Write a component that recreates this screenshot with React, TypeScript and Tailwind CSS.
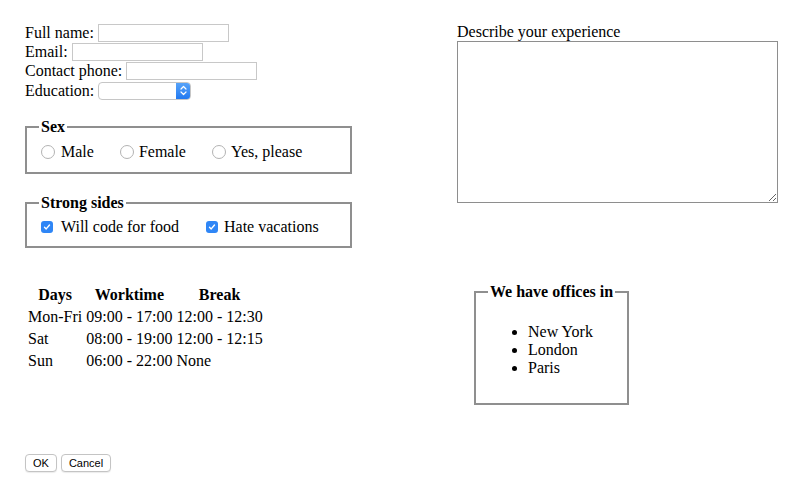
import React from 'react';

const Radio = () => (
    <span className="inline-block w-[14px] h-[14px] rounded-full border border-[#b3b3b3] bg-white shrink-0" />
);

const Check = () => (
    <span className="inline-flex w-[12px] h-[12px] rounded-[3px] bg-[#2f86f6] items-center justify-center shrink-0">
        <svg width="8" height="8" viewBox="0 0 8 8">
            <path d="M1.5 4.2 L3.2 5.9 L6.5 2" stroke="white" strokeWidth="1.4" fill="none" strokeLinecap="round" strokeLinejoin="round" />
        </svg>
    </span>
);

const Select = () => (
    <div className="flex w-[93px] h-[18px] rounded-[4px] border border-[#c6c6c6] bg-white overflow-hidden">
        <div className="flex-1" />
        <div className="w-[15px] -my-px -mr-px rounded-r-[4px] bg-gradient-to-b from-[#5aa6fa] to-[#1c76f0] flex items-center justify-center">
            <svg width="7" height="11" viewBox="0 0 7 11">
                <path d="M1 4 L3.5 1.5 L6 4 M1 7 L3.5 9.5 L6 7" stroke="white" strokeWidth="1.2" fill="none" strokeLinecap="round" strokeLinejoin="round" />
            </svg>
        </div>
    </div>
);

const TextInput = ({ ml }: { ml: string }) => (
    <input type="text" className={`${ml} w-[131px] h-[18px] border border-[#c8c8c8] bg-white outline-none`} />
);

export default function App() {
    return (
        <div className="min-h-[490px] bg-white text-black font-['Liberation_Serif',serif] text-[16px] leading-[18px] pl-[25px] pt-[23px]">
            {/* top row: personal info + description */}
            <div className="flex">
                <div className="w-[432px]">
                    <div className="flex items-center h-[19px]">
                        <span>Full name:</span>
                        <TextInput ml="ml-[4px]" />
                    </div>
                    <div className="flex items-center h-[19px]">
                        <span>Email:</span>
                        <TextInput ml="ml-[4px]" />
                    </div>
                    <div className="flex items-center h-[19px]">
                        <span>Contact phone:</span>
                        <TextInput ml="ml-[4px]" />
                    </div>
                    <div className="flex items-center h-[19px] mt-[1px]">
                        <span>Education:</span>
                        <div className="ml-[4px]"><Select /></div>
                    </div>

                    <fieldset className="mt-[18px] w-[327px] border-2 border-[#8f8f8f] px-[12px] pt-[7px] pb-[11px]">
                        <legend className="px-[2px] font-bold leading-[18px]">Sex</legend>
                        <div className="flex items-center h-[18px]">
                            <label className="flex items-center ml-[2px]"><Radio /><span className="ml-[6px]">Male</span></label>
                            <label className="flex items-center ml-[26px]"><Radio /><span className="ml-[5px]">Female</span></label>
                            <label className="flex items-center ml-[26px]"><Radio /><span className="ml-[5px]">Yes, please</span></label>
                        </div>
                    </fieldset>

                    <fieldset className="mt-[20px] w-[327px] border-2 border-[#8f8f8f] px-[12px] pt-[6px] pb-[10px]">
                        <legend className="px-[2px] font-bold leading-[18px]">Strong sides</legend>
                        <div className="flex items-center h-[18px]">
                            <label className="flex items-center ml-[2px]"><Check /><span className="ml-[8px]">Will code for food</span></label>
                            <label className="flex items-center ml-[27px]"><Check /><span className="ml-[6px]">Hate vacations</span></label>
                        </div>
                    </fieldset>
                </div>

                <div>
                    <div className="h-[18px]">Describe your experience</div>
                    <textarea className="block w-[321px] h-[162px] border border-[#8e8e8e] bg-white resize outline-none" />
                </div>
            </div>

            {/* middle row: schedule + offices */}
            <div className="flex mt-[35px] items-start">
                <div className="w-[449px]">
                    <table className="border-separate border-spacing-[2px]">
                        <thead>
                            <tr>
                                <th className="p-[1px] font-bold text-center">Days</th>
                                <th className="p-[1px] font-bold text-center">Worktime</th>
                                <th className="p-[1px] font-bold text-center">Break</th>
                            </tr>
                        </thead>
                        <tbody>
                            <tr>
                                <td className="p-[1px]">Mon-Fri</td>
                                <td className="p-[1px]">09:00 - 17:00</td>
                                <td className="p-[1px]">12:00 - 12:30</td>
                            </tr>
                            <tr>
                                <td className="p-[1px]">Sat</td>
                                <td className="p-[1px]">08:00 - 19:00</td>
                                <td className="p-[1px]">12:00 - 12:15</td>
                            </tr>
                            <tr>
                                <td className="p-[1px]">Sun</td>
                                <td className="p-[1px]">06:00 - 22:00</td>
                                <td className="p-[1px]">None</td>
                            </tr>
                        </tbody>
                    </table>
                </div>

                <fieldset className="border-2 border-[#8f8f8f] px-[12px] pt-[6px] pb-[10px]">
                    <legend className="px-[2px] font-bold leading-[18px]">We have offices in</legend>
                    <ul className="list-disc pl-[40px] my-[16px]">
                        <li>New York</li>
                        <li>London</li>
                        <li>Paris</li>
                    </ul>
                </fieldset>
            </div>

            {/* buttons */}
            <div className="flex gap-[4px] mt-[49px] font-['Liberation_Sans',sans-serif] text-[11px]">
                <button className="w-[32px] h-[18px] rounded-[4px] border border-[#c4c4c4] bg-white shadow-[0_1px_1px_rgba(0,0,0,0.08)] leading-none">OK</button>
                <button className="w-[50px] h-[18px] rounded-[4px] border border-[#c4c4c4] bg-white shadow-[0_1px_1px_rgba(0,0,0,0.08)] leading-none">Cancel</button>
            </div>
        </div>
    );
}
